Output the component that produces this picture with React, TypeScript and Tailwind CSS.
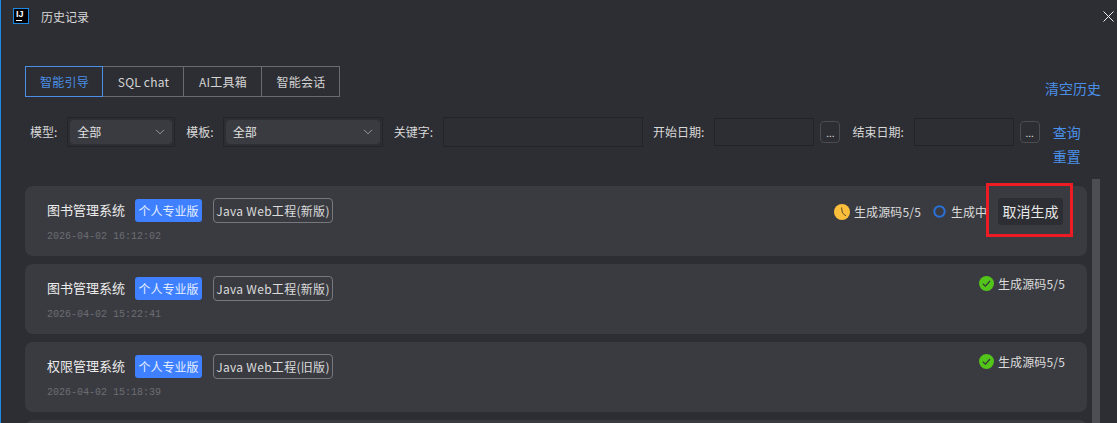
const FONT = "font-['Noto_Sans_CJK_SC','Noto_Sans',sans-serif]";

const tabs = ["智能引导", "SQL chat", "AI工具箱", "智能会话"];
const tabWidths = ["w-[78px]", "w-[81px]", "w-[78px]", "w-[78px]"];

function IdeaLogo() {
  return (
    <div className="w-4 h-4 -mt-px border border-[#1e88e5] bg-black shrink-0 flex flex-col items-start pl-[2px] pt-[1px]">
      <span className="font-['Liberation_Sans',sans-serif] font-bold text-[9px] leading-[9px] text-white">IJ</span>
      <div className="w-[6px] h-px bg-white mt-[1px]" />
    </div>
  );
}

function Select({ width }: { width: string }) {
  return (
    <div className={`${width} h-[30px] border border-[#232428] p-[2px] shrink-0`}>
      <div className="h-full rounded-[4px] bg-[#3a3b41] flex items-center justify-between pl-[7px] pr-[7px]">
        <span className="text-[12px] text-[#e0e0e0]">全部</span>
        <svg width="10" height="6" viewBox="0 0 10 6" fill="none" stroke="#9a9ba0" strokeWidth="1">
          <path d="M1 0.8 L5 4.8 L9 0.8" />
        </svg>
      </div>
    </div>
  );
}

function Label({ text, className }: { text: string; className?: string }) {
  return <span className={`text-[12px] text-[#d8d8d8] shrink-0 ${className ?? ""}`}>{text}</span>;
}

function DateField({ label, labelGap }: { label: string; labelGap: string }) {
  return (
    <div className={`flex items-center ${labelGap}`}>
      <Label text={label} className="mr-[10px]" />
      <div className="w-[100px] h-[28px] border border-[#232428]" />
      <div className="w-5 h-[22px] ml-[6px] rounded-[4px] border border-[#4b4c52] text-[10px] leading-[22px] text-center text-[#e0e0e0]">...</div>
    </div>
  );
}

function ClockIcon() {
  return (
    <svg width="16" height="16" viewBox="0 0 16 16">
      <circle cx="8" cy="8" r="8" fill="#fbbf3c" />
      <path d="M7.5 3.5 L8.5 9 L12 12" fill="none" stroke="#5b4a20" strokeWidth="1" />
    </svg>
  );
}

function SpinnerIcon() {
  return (
    <svg width="13" height="13" viewBox="0 0 13 13">
      <circle cx="6.5" cy="6.5" r="5.2" fill="none" stroke="#2a6fd6" strokeWidth="2" />
    </svg>
  );
}

function CheckIcon() {
  return (
    <svg width="15" height="15" viewBox="0 0 15 15">
      <circle cx="7.5" cy="7.5" r="7.5" fill="#52c41a" />
      <path d="M3.8 7.8 L6.4 10.2 L11 5" fill="none" stroke="#33383a" strokeWidth="1.2" />
    </svg>
  );
}

function RecordCard({ name, kind, time, children }: { name: string; kind: string; time: string; children?: React.ReactNode }) {
  return (
    <div className="h-[70px] rounded-[8px] bg-[#3a3b41] flex justify-between shrink-0 pl-[22px] pr-[22px]">
      <div className="flex flex-col">
        <div className="flex items-center h-[27px] mt-[11px]">
          <span className="w-[88px] mb-[2px] text-[13px] text-[#ececec]">{name}</span>
          <span className="w-[67px] h-[23px] rounded-[3px] bg-[#3e80ff] text-[12px] leading-[23px] text-center text-[#e6efff]">个人专业版</span>
          <span className="ml-[11px] w-[120px] h-[25px] rounded-[4px] border border-[#77787d] text-[12px] leading-[23px] tracking-[0.3px] text-center text-[#dcdcdc] whitespace-nowrap">{kind}</span>
        </div>
        <span className="mt-[6px] font-['Liberation_Mono',monospace] text-[10px] leading-[13px] text-[#6b6d72]">{time}</span>
      </div>
      {children}
    </div>
  );
}

function Done() {
  return (
    <div className="flex items-start gap-[4px] pt-[12px]">
      <CheckIcon />
      <span className="text-[12px] leading-[16px] tracking-[0.15px] text-[#dcdcdc]">生成源码5/5</span>
    </div>
  );
}

export default function App() {
  return (
    <div className={`${FONT} w-[1117px] h-[423px] overflow-hidden bg-[#2d2e33] border-l border-[#1e88e5] relative flex flex-col`}>
      <div className="h-[33px] flex items-center gap-3 pl-3 pr-[3px] shrink-0">
        <IdeaLogo />
        <span className="text-[12px] text-[#d8d8d8]">历史记录</span>
        <svg className="ml-auto" width="11" height="11" viewBox="0 0 11 11" stroke="#f0f0f0" strokeWidth="1">
          <path d="M0.5 0.5 L10.5 10.5 M10.5 0.5 L0.5 10.5" />
        </svg>
      </div>

      <div className="flex items-end justify-between mt-[33px] pl-6 pr-4 shrink-0">
        <div className="flex h-[31px]">
          {tabs.map((t, i) => (
            <div
              key={t}
              className={`${tabWidths[i]} flex items-center justify-center pl-px text-[12px] tracking-[0.2px] border ${
                i === 0 ? "border-[#4a90e8] text-[#4a90e8]" : "border-[#6a6b70] border-l-0 text-[#d4d4d4]"
              }`}
            >
              {t}
            </div>
          ))}
        </div>
        <span className="text-[14px] leading-[20px] text-[#4a90e8] mb-[-1px]">清空历史</span>
      </div>

      <div className="flex mt-[20px] pl-[29px] h-[69px] shrink-0">
        <div className="flex items-center h-[30px]">
          <Label text="模型:" className="mr-[10px]" />
          <Select width="w-[108px]" />
          <Label text="模板:" className="ml-[11px] mr-[9px]" />
          <Select width="w-[160px]" />
          <Label text="关键字:" className="ml-[11px] mr-[10px]" />
          <div className="w-[200px] h-[30px] border border-[#232428]" />
          <DateField label="开始日期:" labelGap="ml-[10px]" />
          <DateField label="结束日期:" labelGap="ml-[12px]" />
        </div>
        <div className="flex flex-col ml-[13px] text-[14px] leading-[20px] text-[#4a90e8] pt-[5px] gap-[4px]">
          <span>查询</span>
          <span>重置</span>
        </div>
      </div>

      <div className="flex flex-1 min-h-0 pl-6 pr-[17px]">
        <div className="flex-1 flex flex-col gap-2">
          <RecordCard name="图书管理系统" kind="Java Web工程(新版)" time="2026-04-02 16:12:02">
            <div className="flex items-start pt-[12px] pr-[2px]">
              <div className="flex items-center gap-[4px] h-[27px]">
                <ClockIcon />
                <span className="text-[12px] tracking-[0.15px] text-[#dcdcdc]">生成源码5/5</span>
                <span className="ml-[8px]"><SpinnerIcon /></span>
                <span className="ml-[1px] text-[12px] text-[#dcdcdc]">生成中</span>
              </div>
              <div className="ml-[11px] w-[65px] h-[27px] rounded-[3px] bg-[#2d2e33] text-[14px] leading-[27px] text-center text-[#e8e8e8]">取消生成</div>
            </div>
          </RecordCard>
          <RecordCard name="图书管理系统" kind="Java Web工程(新版)" time="2026-04-02 15:22:41"><Done /></RecordCard>
          <RecordCard name="权限管理系统" kind="Java Web工程(旧版)" time="2026-04-02 15:18:39"><Done /></RecordCard>
          <div className="h-[70px] rounded-[8px] bg-[#3a3b41] shrink-0" />
        </div>
        <div className="w-2 ml-[5px] -mt-[7px] bg-[#4d4e54] shrink-0" />
      </div>

      <div className="absolute left-[985px] top-[183px] w-[87px] h-[54px] border-[3px] border-[#ed1c24]" />
    </div>
  );
}
